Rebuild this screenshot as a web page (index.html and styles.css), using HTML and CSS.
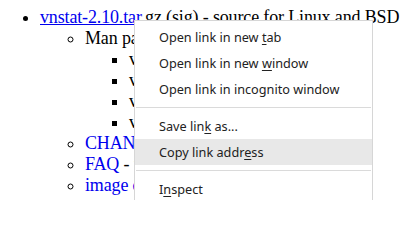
FILE: index.html
```html
<!DOCTYPE html>
<html>
<head>
<meta charset="utf-8">
<link rel="stylesheet" href="styles.css">
</head>
<body>
<div class="page">
  <ul class="lvl1">
    <li><a class="hover" href="#">vnstat-2.10.tar</a><span class="plain">.gz (sig) - source for Linux and BSD</span>
      <ul class="lvl2">
        <li>Man pages
          <ul class="lvl3">
            <li>vnstat</li>
            <li>vnstatd</li>
            <li>vnstati</li>
            <li>vnstat.conf</li>
          </ul>
        </li>
        <li><a href="#">CHANGES</a> - list of changes</li>
        <li><a href="#">FAQ</a> - frequently asked questions</li>
        <li><a href="#">image dump</a></li>
      </ul>
    </li>
  </ul>
</div>
<div class="menu">
  <div class="item"><span>Open link in new <u>t</u>ab</span></div>
  <div class="item"><span>Open link in new <u>w</u>indow</span></div>
  <div class="item"><span>Open link in incognito window</span></div>
  <div class="sep"></div>
  <div class="item"><span>Save lin<u>k</u> as...</span></div>
  <div class="item active"><span>Copy link addr<u>e</u>ss</span></div>
  <div class="sep"></div>
  <div class="item"><span>I<u>n</u>spect</span></div>
</div>
</body>
</html>
```

FILE: styles.css
```css
html, body {
  margin: 0;
  padding: 0;
  background: #ffffff;
  height: 200px;
  overflow: hidden;
}
.page {
  font-family: "Liberation Serif", "Times New Roman", serif;
  font-size: 18px;
  letter-spacing: -0.15px;
  color: #000000;
  padding-top: 7px;
  white-space: nowrap;
  height: 193px;
  overflow: hidden;
}
ul {
  margin: 0;
}
.lvl1 {
  padding-left: 40px;
  list-style-type: disc;
}
.lvl2 {
  padding-left: 45px;
  list-style-type: circle;
}
.lvl3 {
  padding-left: 44px;
  list-style-type: square;
}
a {
  color: #0000ee;
  text-decoration: none;
}
a.hover {
  text-decoration: underline;
}
.menu {
  position: absolute;
  left: 134px;
  top: 20px;
  width: 239px;
  height: 180px;
  box-sizing: border-box;
  background: #ffffff;
  border: 1px solid #d6d6d6;
  border-bottom: none;
  padding-top: 3px;
  font-family: "Noto Sans", "Open Sans", sans-serif;
  font-size: 12.7px;
  color: #222222;
  overflow: hidden;
}
.item {
  height: 26px;
  display: flex;
  align-items: center;
  padding-left: 24px;
  white-space: nowrap;
}
.item u {
  text-decoration: underline;
  text-underline-offset: 2px;
}
.item.active {
  background: #e8e8e8;
}
.sep {
  height: 1px;
  margin: 5px 1px;
  background: #dadada;
}
```
